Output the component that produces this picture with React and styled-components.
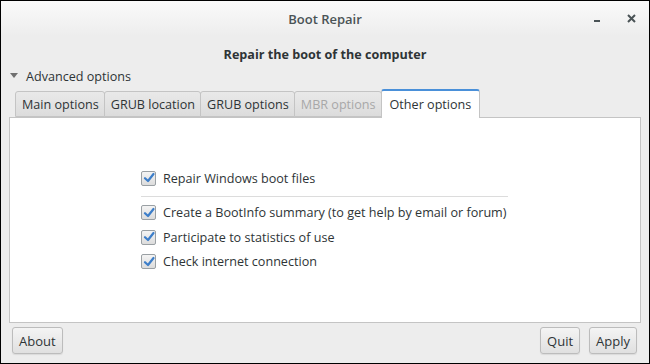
import React from 'react';
import styled, { createGlobalStyle } from 'styled-components';

const Global = createGlobalStyle`
  html, body { margin: 0; padding: 0; background: #000; }
  body { font-family: "Open Sans", "Noto Sans", sans-serif; font-size: 12.6px; }
`;

const Window = styled.div`
  width: 648px;
  height: 362px;
  border: 1px solid #000;
  background: #ededed;
  display: flex;
  flex-direction: column;
  color: #2e3436;
`;

const TitleBar = styled.div`
  height: 35px;
  display: flex;
  align-items: center;
  position: relative;
  background: linear-gradient(#fafafa, #ededed);
`;

const Title = styled.div`
  flex: 1;
  text-align: center;
  font-weight: 600;
  font-size: 13px;
  color: #4a5356;
`;

const WinButtons = styled.div`
  position: absolute;
  right: 13px;
  top: 12px;
  display: flex;
  align-items: center;
  gap: 26px;
`;

const Body = styled.div`
  flex: 1;
  display: flex;
  flex-direction: column;
  padding: 0 8px;
`;

const Heading = styled.div`
  text-align: center;
  font-weight: 700;
  margin-top: 8px;
  height: 22px;
  line-height: 22px;
`;

const Expander = styled.div`
  display: flex;
  align-items: center;
  gap: 8px;
  height: 20px;
  padding-left: 1px;
`;

const TabRow = styled.div`
  display: flex;
  align-items: flex-end;
  height: 31px;
  padding-left: 7px;
  position: relative;
  z-index: 1;
`;

const Tab = styled.div`
  height: ${p => (p.$active ? 29 : 26)}px;
  padding: 0 ${p => (p.$active ? 8 : 5)}px 0 ${p => (p.$active ? 8 : 6)}px;
  box-sizing: border-box;
  display: flex;
  align-items: center;
  border: 1px solid #c4c4c4;
  border-bottom: ${p => (p.$active ? 'none' : '1px solid #c4c4c4')};
  border-top: ${p => (p.$active ? '2px solid #4a90d9' : '1px solid #c4c4c4')};
  border-radius: 3px 3px 0 0;
  margin-left: -1px;
  margin-bottom: ${p => (p.$active ? -1 : 0)}px;
  background: ${p => (p.$active ? '#fff' : 'linear-gradient(#e9e9e9, #dcdcdc)')};
  color: ${p => (p.$disabled ? '#a8a8a8' : '#2e3436')};
`;

const Panel = styled.div`
  flex: 1;
  background: #fff;
  border: 1px solid #c4c4c4;
  display: flex;
  flex-direction: column;
  padding: 48px 0 0 131px;
`;

const Row = styled.label`
  display: flex;
  align-items: center;
  gap: 7px;
  height: 24.5px;
`;

const Separator = styled.div`
  width: 367px;
  height: 1px;
  background: #dcdcdc;
  margin: 5px 0 4px;
`;

const Box = styled.span`
  width: 13px;
  height: 13px;
  border: 1px solid #9aa0a4;
  border-radius: 2px;
  background: linear-gradient(#f4f4f4, #dcdcdc);
  display: flex;
  align-items: center;
  justify-content: center;
`;

const Footer = styled.div`
  display: flex;
  align-items: flex-start;
  height: 40px;
  box-sizing: border-box;
  gap: 9px;
  padding: 4px 4px 0 3px;
`;

const Spacer = styled.div`
  flex: 1;
`;

const Button = styled.div`
  height: 27px;
  box-sizing: border-box;
  padding: 0 6px;
  display: flex;
  align-items: center;
  border: 1px solid #bcbcbc;
  border-radius: 3px;
  background: linear-gradient(#f4f4f4, #e0e0e0);
  box-shadow: 0 1px 1px rgba(0,0,0,0.08);
  font-size: 13px;
`;

const Check = () => (
  <Box>
    <svg width="12" height="12" viewBox="0 0 12 12">
      <path d="M2 6.2 L5 9 L10.5 2" fill="none" stroke="#3d7ec9" strokeWidth="2.2" strokeLinecap="round" strokeLinejoin="round" />
    </svg>
  </Box>
);

const Option = ({ children }) => (
  <Row>
    <Check />
    <span>{children}</span>
  </Row>
);

export default function App() {
  return (
    <Window>
      <Global />
      <TitleBar>
        <Title>Boot Repair</Title>
        <WinButtons>
          <svg width="8" height="10" viewBox="0 0 8 10">
            <rect x="1" y="7" width="6" height="2" fill="#4a5356" />
          </svg>
          <svg width="9" height="9" viewBox="0 0 9 9">
            <path d="M1 1 L8 8 M8 1 L1 8" stroke="#4a5356" strokeWidth="2" />
          </svg>
        </WinButtons>
      </TitleBar>
      <Body>
        <Heading>Repair the boot of the computer</Heading>
        <Expander>
          <svg width="8" height="6" viewBox="0 0 8 6">
            <path d="M0 0 L8 0 L4 5 Z" fill="#707070" />
          </svg>
          <span>Advanced options</span>
        </Expander>
        <TabRow>
          <Tab>Main options</Tab>
          <Tab>GRUB location</Tab>
          <Tab>GRUB options</Tab>
          <Tab $disabled>MBR options</Tab>
          <Tab $active>Other options</Tab>
        </TabRow>
        <Panel>
          <Option>Repair Windows boot files</Option>
          <Separator />
          <Option>Create a BootInfo summary (to get help by email or forum)</Option>
          <Option>Participate to statistics of use</Option>
          <Option>Check internet connection</Option>
        </Panel>
        <Footer>
          <Button>About</Button>
          <Spacer />
          <Button>Quit</Button>
          <Button>Apply</Button>
        </Footer>
      </Body>
    </Window>
  );
}
